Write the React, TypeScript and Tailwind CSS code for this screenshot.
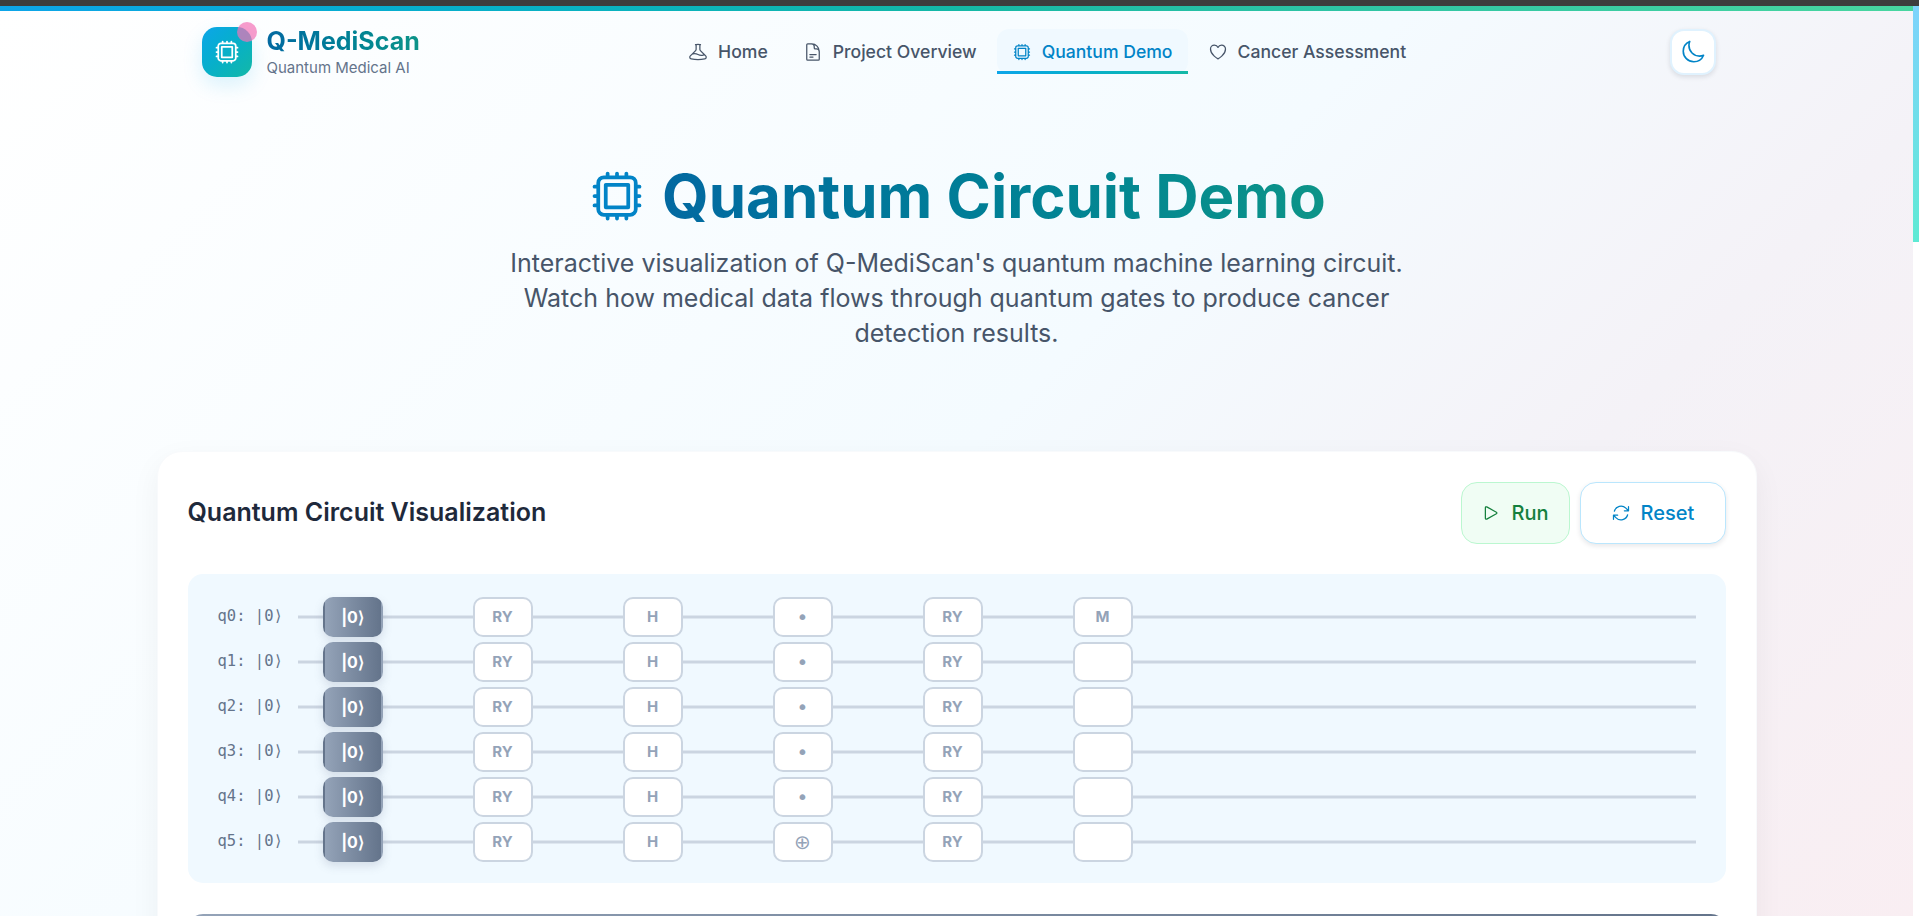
import {
  HiOutlineArrowPath,
  HiOutlineBeaker,
  HiOutlineCpuChip,
  HiOutlineDocumentText,
  HiOutlineHeart,
  HiOutlineMoon,
  HiOutlinePlay,
} from 'react-icons/hi2'

const font = "font-['Inter','Noto_Sans',sans-serif]"

const navItems = [
  { label: 'Home', icon: HiOutlineBeaker },
  { label: 'Project Overview', icon: HiOutlineDocumentText },
  { label: 'Quantum Demo', icon: HiOutlineCpuChip, active: true },
  { label: 'Cancer Assessment', icon: HiOutlineHeart },
]

const gates = [
  ['RY', 'H', '•', 'RY', 'M'],
  ['RY', 'H', '•', 'RY', ''],
  ['RY', 'H', '•', 'RY', ''],
  ['RY', 'H', '•', 'RY', ''],
  ['RY', 'H', '•', 'RY', ''],
  ['RY', 'H', '⊕', 'RY', ''],
]

function Header() {
  return (
    <header className="mx-auto flex h-[81px] w-[1600px] items-center justify-between pr-[40px] pl-[45px]">
      <div className="flex items-center gap-[15px]">
        <div className="relative flex h-[50px] w-[50px] items-center justify-center rounded-[15px] bg-linear-to-br from-[#0ea5e9] to-[#14b8a6] shadow-[0_8px_20px_rgba(14,165,233,0.15)]">
          <HiOutlineCpuChip className="h-7 w-7 text-white" />
          <span className="absolute -top-[5px] -right-[5px] h-5 w-5 rounded-full bg-[#f472b6]/70" />
        </div>
        <div>
          <div className="bg-linear-to-r from-[#0369a1] to-[#0d9488] bg-clip-text text-[25px] leading-[30px] font-bold text-transparent">
            Q-MediScan
          </div>
          <div className="pt-[2px] text-[15px] leading-[20px] text-[#64748b]">Quantum Medical AI</div>
        </div>
      </div>
      <nav className="ml-[4px] flex items-center gap-[5px]">
        {navItems.map((item) => (
          <a
            key={item.label}
            href="#"
            className={`relative flex h-[45px] items-center gap-[10px] rounded-xl px-[15px] text-[17.6px] font-medium ${
              item.active ? 'bg-[#f0f9ff] text-[#0284c7]' : 'text-[#475569]'
            }`}
          >
            <item.icon className="h-5 w-5" />
            <span className="pt-[2px]">{item.label}</span>
            {item.active && (
              <span className="absolute inset-x-0 bottom-0 h-[3px] bg-linear-to-r from-[#0ea5e9] to-[#14b8a6]" />
            )}
          </a>
        ))}
      </nav>
      <button className="flex h-[46px] w-[46px] items-center justify-center rounded-[14px] border-2 border-[#e0f2fe] bg-white text-[#0284c7] shadow-[0_2px_5px_rgba(15,23,42,0.12)]">
        <HiOutlineMoon className="h-[26px] w-[26px]" />
      </button>
    </header>
  )
}

function Hero() {
  return (
    <section className="flex flex-col items-center pt-[68px] text-center">
      <h1 className="flex h-[72px] items-center gap-[15px] text-[60px] leading-[72px] font-bold">
        <HiOutlineCpuChip className="h-[60px] w-[60px] text-[#0284c7]" />
        <span className="bg-linear-to-r from-[#0369a1] to-[#0d9488] bg-clip-text text-transparent">
          Quantum Circuit Demo
        </span>
      </h1>
      <p className="mt-[14px] w-[900px] text-[25px] leading-[35px] text-[#475569]">
        Interactive visualization of Q-MediScan's quantum machine learning circuit. Watch how medical data flows
        through quantum gates to produce cancer detection results.
      </p>
    </section>
  )
}

function Gate({ label }: { label: string }) {
  const symbol = label === '•' || label === '⊕'
  return (
    <div
      className={`z-10 flex h-10 w-[60px] items-center justify-center rounded-[10px] border-2 border-[#cbd5e1] bg-white text-[#94a3b8] ${
        symbol ? "font-['DejaVu_Sans',sans-serif] text-[20px] font-normal" : 'text-[15px] font-bold'
      }`}
    >
      {label}
    </div>
  )
}

function CircuitRow({ index, row }: { index: number; row: string[] }) {
  return (
    <div className="flex h-10 items-center">
      <div className="w-[80px] shrink-0 font-['DejaVu_Sans_Mono',monospace] text-[15.5px] text-[#64748b]">
        q{index}: |0⟩
      </div>
      <div className="relative flex flex-1 items-center gap-[90px] pl-[25px]">
        <div className="absolute inset-x-0 top-1/2 h-[3px] -translate-y-1/2 bg-[#cbd5e1]" />
        <div className="z-10 flex h-10 w-[60px] items-center justify-center rounded-[10px] border-2 border-transparent bg-linear-to-r from-[#94a3b8] to-[#64748b] text-[16px] font-bold text-white shadow-[0_4px_10px_rgba(100,116,139,0.2)]">
          |0⟩
        </div>
        {row.map((label, i) => (
          <Gate key={i} label={label} />
        ))}
      </div>
    </div>
  )
}

function CircuitCard() {
  return (
    <section className="mx-auto mt-[100px] w-[1600px] rounded-t-[25px] border border-[#f8fafc] bg-white px-[30px] pt-[30px] shadow-[0_10px_30px_rgba(15,23,42,0.05)]">
      <div className="flex items-center justify-between">
        <h2 className="text-[25px] font-semibold text-[#1e293b]">Quantum Circuit Visualization</h2>
        <div className="flex gap-[10px]">
          <button className="flex h-[62px] w-[109px] items-center justify-center gap-[10px] rounded-[16px] border border-[#bbf7d0] bg-[#f0fdf4] text-[20px] font-medium text-[#15803d]">
            <HiOutlinePlay className="h-5 w-5" />
            Run
          </button>
          <button className="flex h-[62px] w-[146px] items-center justify-center gap-[10px] rounded-[16px] border border-[#bae6fd] bg-white text-[20px] font-medium text-[#0284c7] shadow-[0_2px_5px_rgba(15,23,42,0.1)]">
            <HiOutlineArrowPath className="h-5 w-5" />
            Reset
          </button>
        </div>
      </div>
      <div className="mt-[30px] flex h-[309px] flex-col gap-[5px] rounded-[15px] bg-[#f0f9ff] px-[30px] pt-[23px]">
        {gates.map((row, i) => (
          <CircuitRow key={i} index={i} row={row} />
        ))}
      </div>
      <div className="mt-[31px] h-[100px] rounded-t-[15px] bg-linear-to-r from-[#94a3b8] to-[#64748b]" />
    </section>
  )
}

export default function App() {
  return (
    <div className={`flex h-[916px] flex-col overflow-hidden ${font}`}>
      <div className="h-[6px] shrink-0 bg-[#3d3d3d]" />
      <div className="flex min-h-0 flex-1">
        <main className="min-w-0 flex-1 overflow-hidden bg-[linear-gradient(135deg,#ffffff_0%,#f4fbff_50%,#f4f2f7_72%,#f9eef2_100%)]">
          <div className="h-[5px] bg-linear-to-r from-[#0ea5e9] via-[#14b8a6] to-[#48d6a0]" />
          <Header />
          <Hero />
          <CircuitCard />
        </main>
        <div className="w-[6px] shrink-0 bg-white">
          <div className="h-[236px] bg-linear-to-b from-[#7dd3fc] to-[#5eead4]" />
        </div>
      </div>
    </div>
  )
}
